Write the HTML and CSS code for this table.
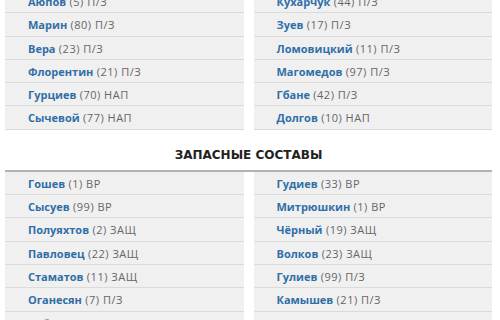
FILE: index.html
```html
<!DOCTYPE html>
<html lang="ru">
<head>
<meta charset="utf-8">
<link rel="stylesheet" href="styles.css">
</head>
<body>
<div class="page">
  <div class="lineup">
    <ul class="team">
      <li class="row"><span class="name">Аюпов</span> (5) П/З</li>
      <li class="row"><span class="name">Марин</span> (80) П/З</li>
      <li class="row"><span class="name">Вера</span> (23) П/З</li>
      <li class="row"><span class="name">Флорентин</span> (21) П/З</li>
      <li class="row"><span class="name">Гурциев</span> (70) НАП</li>
      <li class="row"><span class="name">Сычевой</span> (77) НАП</li>
    </ul>
    <ul class="team">
      <li class="row"><span class="name">Кухарчук</span> (44) П/З</li>
      <li class="row"><span class="name">Зуев</span> (17) П/З</li>
      <li class="row"><span class="name">Ломовицкий</span> (11) П/З</li>
      <li class="row"><span class="name">Магомедов</span> (97) П/З</li>
      <li class="row"><span class="name">Гбане</span> (42) П/З</li>
      <li class="row"><span class="name">Долгов</span> (10) НАП</li>
    </ul>
  </div>
  <h2 class="section-title">Запасные составы</h2>
  <div class="lineup bordered">
    <ul class="team">
      <li class="row"><span class="name">Гошев</span> (1) ВР</li>
      <li class="row"><span class="name">Сысуев</span> (99) ВР</li>
      <li class="row"><span class="name">Полуяхтов</span> (2) ЗАЩ</li>
      <li class="row"><span class="name">Павловец</span> (22) ЗАЩ</li>
      <li class="row"><span class="name">Стаматов</span> (11) ЗАЩ</li>
      <li class="row"><span class="name">Оганесян</span> (7) П/З</li>
      <li class="row"><span class="name">Кобялко</span> (10) П/З</li>
    </ul>
    <ul class="team">
      <li class="row"><span class="name">Гудиев</span> (33) ВР</li>
      <li class="row"><span class="name">Митрюшкин</span> (1) ВР</li>
      <li class="row"><span class="name">Чёрный</span> (19) ЗАЩ</li>
      <li class="row"><span class="name">Волков</span> (23) ЗАЩ</li>
      <li class="row"><span class="name">Гулиев</span> (99) П/З</li>
      <li class="row"><span class="name">Камышев</span> (21) П/З</li>
      <li class="row"><span class="name">Лысенков</span> (14) П/З</li>
    </ul>
  </div>
</div>
</body>
</html>
```
FILE: styles.css
```css
html, body {
  margin: 0;
  padding: 0;
  background: #ffffff;
}
body {
  font-family: "Open Sans", "Liberation Sans", sans-serif;
  font-size: 11px;
  color: #666666;
  overflow: hidden;
}
.page {
  width: 487px;
  margin: -10px 0 0 5px;
}
.lineup {
  display: grid;
  grid-template-columns: 1fr 1fr;
  column-gap: 10px;
}
.lineup.bordered {
  border-top: 2px solid #b3b3b3;
}
.team {
  list-style: none;
  margin: 0;
  padding: 0;
}
.row {
  height: 22.3px;
  line-height: 23px;
  padding-left: 23px;
  background: #f1f0f1;
  border-bottom: 1px solid #dcdbdc;
  white-space: nowrap;
  letter-spacing: 0.5px;
}
.name {
  color: #2f6fa6;
  font-weight: 700;
  letter-spacing: 0;
}
.section-title {
  margin: 0;
  height: 30px;
  padding-top: 10px;
  line-height: 30px;
  text-align: center;
  font-family: "DejaVu Sans", "Open Sans", sans-serif;
  font-size: 12px;
  font-weight: 700;
  text-transform: uppercase;
  color: #222222;
}
```
